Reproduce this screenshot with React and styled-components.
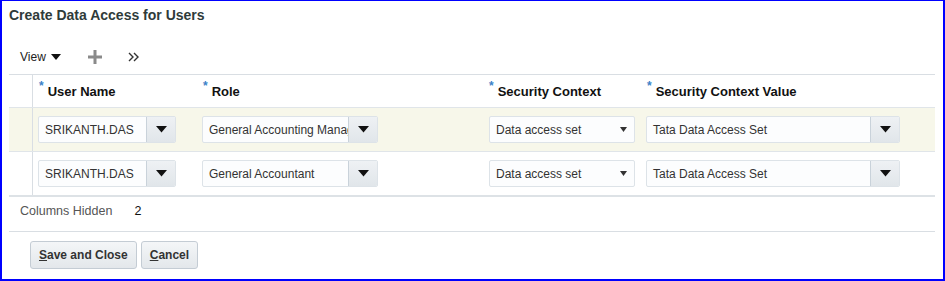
import React from "react";
import styled, { createGlobalStyle } from "styled-components";

const Global = createGlobalStyle`
  body { margin: 0; font-family: "Liberation Sans", Arial, sans-serif; background: #fff; }
`;

const Frame = styled.div`
  width: 945px;
  height: 281px;
  box-sizing: border-box;
  border: 2px solid #0000ff;
  border-top-width: 1px;
  padding: 6px 8px 0 7px;
`;

const Title = styled.h1`
  margin: 0;
  font-size: 14px;
  font-weight: bold;
  color: #2f3b3a;
  line-height: 16px;
`;

const Toolbar = styled.div`
  display: flex;
  align-items: center;
  height: 22px;
  margin-top: 23px;
  padding-left: 11px;
  font-size: 12px;
  color: #222;
`;

const ViewMenu = styled.span`
  display: flex;
  align-items: center;
  gap: 5px;
  width: 68px;
`;

const ToolIcon = styled.span`
  display: flex;
  align-items: center;
  width: 40px;
`;

const Table = styled.div`
  margin-top: 6px;
  border-top: 1px solid #d9dee3;
  border-bottom: 2px solid #dde2e6;
  width: 926px;
`;

const Row = styled.div`
  display: grid;
  grid-template-columns: 24px 164px 286px 158px 1fr;
  height: ${(p) => p.$h}px;
  background: ${(p) => (p.$selected ? "#f7f7ea" : "#fff")};
  border-bottom: ${(p) => (p.$last ? "none" : "1px solid #e0e5e9")};
`;

const Cell = styled.div`
  display: flex;
  align-items: center;
  padding-left: ${(p) => p.$pad ?? 5}px;
`;

const SelCell = styled.div`
  border-right: 1px solid #d9dee3;
  box-sizing: border-box;
`;

const HeadText = styled.span`
  font-size: 13px;
  font-weight: bold;
  color: #111;
  display: flex;
  align-items: flex-start;
  gap: 4px;
`;

const Req = styled.span`
  color: #3b82c8;
  font-size: 12px;
  line-height: 10px;
  margin-top: -3px;
  margin-left: 1px;
`;

const Combo = styled.div`
  display: flex;
  height: 27px;
  width: ${(p) => p.$w}px;
  box-sizing: border-box;
  border: 1px solid #dde3e8;
  border-radius: 2px;
  background: #fcfdfe;
  overflow: hidden;
`;

const ComboText = styled.div`
  flex: 1;
  display: flex;
  align-items: center;
  padding-left: 6px;
  font-size: 12px;
  color: #333;
  white-space: nowrap;
  overflow: hidden;
`;

const ComboButton = styled.div`
  width: 28px;
  border-left: 1px solid #c9d2da;
  background: linear-gradient(#eef1f4, #e1e6ea);
  display: flex;
  align-items: center;
  justify-content: center;
`;

const SelectArrow = styled.div`
  width: 22px;
  display: flex;
  align-items: center;
  justify-content: center;
`;

const Footer = styled.div`
  display: flex;
  align-items: flex-start;
  height: 35px;
  box-sizing: border-box;
  padding: 7px 0 0 11px;
  gap: 22px;
  font-size: 12.5px;
  line-height: 14px;
  border-bottom: 1px solid #d9dee3;
  width: 926px;
  color: #555;
  b { font-weight: normal; color: #111; }
`;

const Buttons = styled.div`
  display: flex;
  gap: 4px;
  margin-top: 9px;
  padding-left: 21px;
`;

const Button = styled.button`
  height: 28px;
  padding: 0 8px;
  font-family: "Liberation Sans", Arial, sans-serif;
  font-size: 12px;
  font-weight: bold;
  color: #333;
  border: 1px solid #c4ccd4;
  border-radius: 3px;
  background: linear-gradient(#f4f6f8, #e3e7eb);
  u { text-decoration: underline; }
`;

const Tri = ({ size = 9 }) => (
  <svg width={size} height={size * 0.6} viewBox="0 0 10 6">
    <path d="M0 0H10L5 6Z" fill="#111" />
  </svg>
);

const ComboBox = ({ value, w }) => (
  <Combo $w={w}>
    <ComboText>{value}</ComboText>
    <ComboButton>
      <Tri size={11} />
    </ComboButton>
  </Combo>
);

const Select = ({ value, w }) => (
  <Combo $w={w}>
    <ComboText>{value}</ComboText>
    <SelectArrow>
      <svg width="7" height="5" viewBox="0 0 10 7">
        <path d="M0 0H10L5 7Z" fill="#333" />
      </svg>
    </SelectArrow>
  </Combo>
);

const rows = [
  { user: "SRIKANTH.DAS", role: "General Accounting Manager", selected: true },
  { user: "SRIKANTH.DAS", role: "General Accountant", selected: false },
];

const Header = ({ children }) => (
  <HeadText>
    <Req>*</Req>
    {children}
  </HeadText>
);

export default function App() {
  return (
    <>
      <Global />
      <Frame>
        <Title>Create Data Access for Users</Title>
        <Toolbar>
          <ViewMenu>
            View <Tri size={10} />
          </ViewMenu>
          <ToolIcon>
            <svg width="14" height="14" viewBox="0 0 14 14">
              <path d="M5.5 0h3v5.5H14v3H8.5V14h-3V8.5H0v-3h5.5z" fill="#8a8a8a" />
            </svg>
          </ToolIcon>
          <ToolIcon>
            <svg width="12" height="10" viewBox="0 0 12 10">
              <path d="M1 1l4 4-4 4M6 1l4 4-4 4" stroke="#333" strokeWidth="1.4" fill="none" />
            </svg>
          </ToolIcon>
        </Toolbar>
        <Table>
          <Row $h={32}>
            <SelCell />
            <Cell $pad={5}><Header>User Name</Header></Cell>
            <Cell $pad={5}><Header>Role</Header></Cell>
            <Cell $pad={5}><Header>Security Context</Header></Cell>
            <Cell $pad={5}><Header>Security Context Value</Header></Cell>
          </Row>
          {rows.map((r, i) => (
            <Row key={i} $h={43} $selected={r.selected} $last={i === rows.length - 1}>
              <SelCell />
              <Cell $pad={5}><ComboBox value={r.user} w={138} /></Cell>
              <Cell $pad={5}><ComboBox value={r.role} w={176} /></Cell>
              <Cell $pad={6}><Select value="Data access set" w={146} /></Cell>
              <Cell $pad={5}><ComboBox value="Tata Data Access Set" w={254} /></Cell>
            </Row>
          ))}
        </Table>
        <Footer>
          <span>Columns Hidden</span>
          <b>2</b>
        </Footer>
        <Buttons>
          <Button><u>S</u>ave and Close</Button>
          <Button><u>C</u>ancel</Button>
        </Buttons>
      </Frame>
    </>
  );
}
